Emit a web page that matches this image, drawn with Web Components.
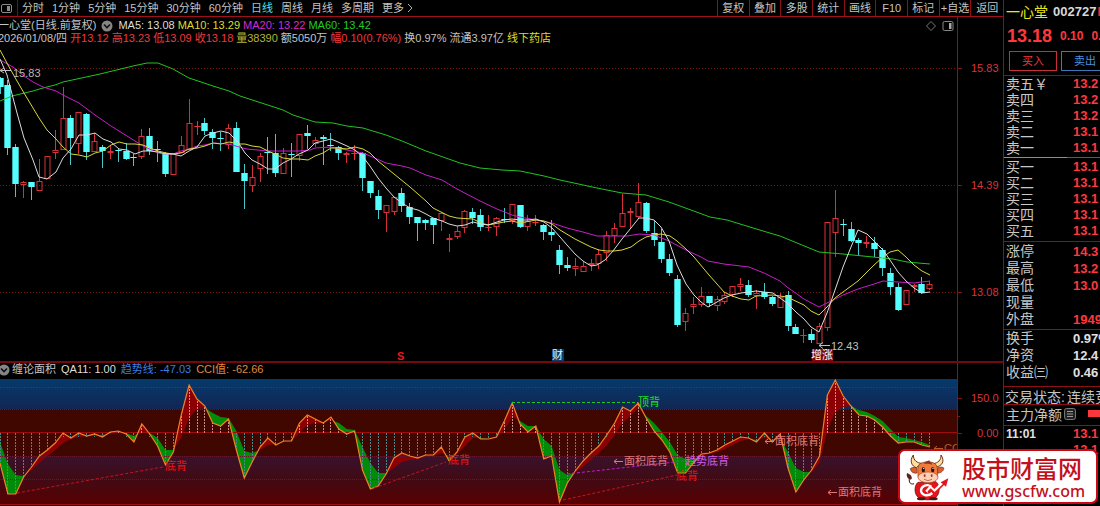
<!DOCTYPE html>
<html lang="zh-CN">
<head>
<meta charset="utf-8">
<title>一心堂 002727</title>
<style>
html,body{margin:0;background:#000}
body{font:11px "Liberation Sans","Noto Sans CJK SC",sans-serif;color:#c4c4c4;overflow:hidden}
</style>
</head>
<body>
<stock-app></stock-app>
<script>
const define=(name,html,setup)=>{
  const tpl=document.createElement('template');
  tpl.innerHTML=html;
  customElements.define(name,class extends HTMLElement{
    constructor(){
      super();
      this.attachShadow({mode:'open'}).append(tpl.content.cloneNode(true));
    }
    connectedCallback(){ if(setup&&!this.ready){this.ready=true;setup(this,this.shadowRoot);} }
  });
};
const STEP=7.88;

/* ---------- toolbar ---------- */
define('tool-bar',`
<style>
:host{display:flex;height:16px;border-bottom:1px solid #a01018;overflow:hidden}
button{all:unset;white-space:nowrap;line-height:15px;cursor:pointer}
.panel{width:17px;border-right:1px solid #701018;display:flex;align-items:center}
.periods{display:flex;flex:1;gap:8px;padding-left:4px}
.on{color:#45e6ea}
.more{display:flex;align-items:center;gap:3px}
.tools{display:grid;grid-template-columns:repeat(9,1fr);width:285px;border-left:1px solid #901018}
.tools button{text-align:center;border-right:1px solid #901018}
.tools button:last-child{border:0}
</style>
<button class="panel" aria-label="面板"><svg width="13" height="13" fill="none" stroke="#8c8c8c"><rect x="1.500" y="2.500" width="10" height="8" rx="1.500"/><rect x="7.500" y="4.500" width="2" height="4" fill="#8c8c8c"/></svg></button>
<div class="periods"></div>
<div class="tools"></div>`,(el,root)=>{
  const make=(box,text,cls)=>{const b=document.createElement('button');b.textContent=text;if(cls)b.className=cls;box.append(b);return b;};
  const p=root.querySelector('.periods'),t=root.querySelector('.tools');
  '分时,1分钟,5分钟,15分钟,30分钟,60分钟,日线,周线,月线,多周期'.split(',').forEach(s=>make(p,s,s==='日线'?'on':''));
  make(p,'更多','more').insertAdjacentHTML('beforeend','<svg width="6" height="10" fill="none" stroke="#b0b0b0"><path d="M1 1l4 4-4 4"/></svg>');
  '复权,叠加,多股,统计,画线,F10,标记,+自选,返回'.split(',').forEach(s=>make(t,s));
});

/* ---------- legend drawn over a plot ---------- */
define('legend-line',`
<style>
:host{display:flex;align-items:center;gap:3px;line-height:13px;white-space:nowrap}
::slotted(svg){flex:none;margin:0 2px}
</style><slot></slot>`);

/* ---------- price chart ---------- */
/* kind (c falling, r rising), body top, body bottom, high, low */
const CANDLES=`c78,87,77,94 c85,148,80,155 c147,184,144,197 r182,185,181,198 c182,187,182,200 r181,191,159,191 r156,179,156,179 r150,153,130,159 r118,150,87,150 c118,138,115,165
r112,144,112,154 c114,152,113,160 r141,152,133,152 c147,151,145,168 r151,153,145,159 c150,151,148,162 c151,159,143,160 c157,158,154,166 r136,157,129,159 c136,151,128,155
c149,150,141,162 c153,174,152,177 r153,175,153,175 r145,153,136,153 r123,150,99,150 r126,127,121,135 c123,131,118,135 c132,138,129,149 c138,139,132,151 r128,145,124,149
c128,172,122,172 c173,181,164,209 r177,186,165,192 r156,169,153,182 c152,153,137,174 c153,173,134,177 r153,174,148,174 c154,155,143,177 r134,156,134,161 c133,136,125,149
r140,144,137,147 c137,139,135,165 c145,146,133,151 c147,153,146,160 r153,155,152,163 r153,154,145,160 c153,178,152,191 c181,193,181,198 c196,210,190,219 r205,213,205,232
r197,212,197,215 c193,206,188,212 c207,217,203,224 c217,223,217,241 c220,223,219,230 c218,225,218,244 r213,221,212,231 r238,240,234,252 r231,237,226,239 r211,228,210,233
c212,218,208,224 c215,227,209,231 r227,228,215,231 r218,227,217,236 c219,220,208,223 r204,221,204,224 c205,227,205,228 r221,227,215,231 r222,223,215,226 c225,232,224,240
c232,235,220,241 c250,265,245,274 c265,268,257,271 r266,269,258,276 r266,272,261,272 r263,265,259,271 r254,264,249,269 r235,253,231,261 r228,236,223,243 r213,227,194,227
r211,213,208,228 r202,217,183,219 c203,231,202,233 c233,240,220,246 c242,259,229,263 c259,273,254,276 c279,325,275,327 r313,322,308,331 r304,307,297,314 r296,305,287,307
c296,303,296,307 r299,306,296,311 r295,302,292,304 r286,295,286,297 r284,287,278,291 c285,295,280,297 r293,296,290,309 c292,297,283,299 c297,304,296,306 r297,308,293,308
c295,326,291,331 c327,334,324,334 r335,336,329,343 c334,340,329,343 r326,344,323,344 r222,328,222,331 r218,233,190,257 c224,225,219,236 c229,241,222,242 c240,243,238,255
r242,244,236,248 c243,249,237,257 c250,268,248,276 c273,287,268,295 c287,310,283,311 r290,305,290,305 r285,287,284,292 c284,293,277,294 r284,289,281,290`
.trim().split(/\s+/).map(s=>[s[0],...s.slice(1).split(',').map(Number)]);

define('price-chart',`
<style>
:host{display:grid;overflow:hidden}
.plot,.info{grid-area:1/1;min-width:0}
.plot{display:block;width:100%;height:auto}
.info{display:grid;grid-template-columns:1fr auto;align-content:start;padding:2px 49px 0 0;margin-left:-2px;z-index:1}
.info legend-line:last-of-type{grid-column:1/3}
.icons{display:flex;gap:5px;align-items:center}
.m5{color:#ddd}.m10,.y{color:#dcdc2c}.m20{color:#d428d4}.m60{color:#22cc22}.r{color:#f0383c}.v{color:#b4b43a}
text{font-size:11px}
</style>
<svg class="plot" viewBox="0 17 1003 344"></svg>
<div class="info">
<legend-line><span>一心堂(日线.前复权)</span><svg width="12" height="12"><circle cx="6" cy="6" r="5.500" fill="#858585"/><path d="M3 4.500l3 3 3-3" fill="none" stroke="#111" stroke-width="1.600"/></svg><span class="m5">MA5: 13.08</span> <span class="m10">MA10: 13.29</span> <span class="m20">MA20: 13.22</span> <span class="m60">MA60: 13.42</span></legend-line>
<div class="icons"><svg width="12" height="12" fill="none" stroke="#777"><path d="M6 1.500L10.500 6 6 10.500 1.500 6z"/></svg><svg width="12" height="12" fill="none" stroke="#888"><rect x="1" y="1.500" width="10" height="9" rx="1.500"/><rect x="7" y="3" width="2.500" height="6" fill="#aaa" stroke="none"/></svg></div>
<legend-line><span>2026/01/08/四</span> <span class="r">开13.12</span> <span class="r">高13.23</span> <span class="r">低13.09</span> <span class="r">收13.18</span> <span class="v">量38390</span> <span>额5050万</span> <span class="r">幅0.10(0.76%)</span> <span>换0.97%</span> <span>流通3.97亿</span> <span class="y">线下药店</span></legend-line>
</div>`,(el,root)=>{
  let s='';
  for(const y of [68.5,185.5,292.5]) s+=`<path d="M0 ${y}H957" stroke="#701414" stroke-dasharray="1 2"/><path d="M957 ${y}h5" stroke="#8c1016"/>`;
  s+='<path d="M957.500 17V361" stroke="#8c1016"/>';
  s+=[['15.83',72],['14.39',189],['13.08',296]].map(([t,y])=>`<text x="971" y="${y}" fill="#d8343c">${t}</text>`).join('');
  CANDLES.forEach(([k,t,b,h,l],i)=>{
    const c=Math.floor(i*STEP)+.5, x=c-3.2;
    if(k==='c'){
      s+=`<path d="M${c} ${h}V${l}" stroke="#46c8c8"/>`;
      s+=`<rect x="${x}" y="${t}" width="6.400" height="${b-t}" fill="#54ffff"/>`;
    }else if(b-t<2){
      s+=`<path d="M${c} ${h}V${l}M${x} ${t+.5}h6.400" stroke="#e83038"/>`;
    }else{
      s+=`<path d="M${c} ${h}V${t}M${c} ${b}V${l}" stroke="#d83038"/><rect x="${c-2.5}" y="${t+.5}" width="5" height="${b-t-1}" fill="none" stroke="#d83038"/>`;
    }
  });
  const line=(c,p)=>`<polyline fill="none" stroke="${c}" points="${p}"/>`;
  s+=line('#20c420','0,101 12,96 33,91 43,88 55,85 63,82 100,74 133,66 147,63 158,63 173,69 189,78 213,86 229,91 240,96 283,110 293,115 315,122 333,123 347,126 363,128 386,135 402,141 426,151 443,157 460,163 480,168 502,170 520,171 544,176 560,180 597,188 622,193 646,195 669,202 680,206 710,217 727,220 763,231 780,236 819,252 843,254 873,257 893,259 907,262 930,264');
  s+=line('#c81ec8','0,60 13,67 24,76 33,82 43,87 56,91 63,95 79,103 95,115 111,126 127,136 143,146 158,153 166,154 173,154 181,151 189,149 197,146 205,145 213,143 229,144 239,147 247,149 268,151 299,151 310,150 315,148 331,147 347,150 363,153 377,159 386,163 402,166 410,168 426,175 442,180 457,189 480,201 497,209 512,215 520,217 536,220 552,223 567,228 583,232 597,236 627,236 639,234 654,235 669,241 686,250 701,257 708,261 724,264 749,267 764,273 780,281 787,287 804,299 819,307 827,303 843,295 858,289 874,284 883,281 898,282 914,283 930,281');
  s+=line('#d8d83c','0,50 8,65 17,81 24,93 33,108 39,118 47,130 56,139 63,147 71,154 79,155 87,157 95,153 103,151 111,145 119,142 127,144 135,144 143,145 150,148 158,151 166,153 173,154 181,153 189,149 197,148 205,146 213,143 221,144 229,142 239,144 245,144 252,146 260,147 268,151 275,154 283,158 291,159 299,159 308,160 315,156 323,153 331,148 338,148 347,149 355,147 363,149 370,153 378,161 394,174 410,187 426,201 433,208 449,216 457,218 473,219 481,223 488,225 504,222 512,221 520,223 536,220 544,221 552,224 560,230 575,239 591,247 599,250 607,251 614,251 622,250 631,247 639,241 646,237 654,235 661,234 670,236 677,241 686,249 694,257 709,275 717,284 724,292 732,296 741,299 749,300 756,296 773,295 787,297 804,305 811,311 819,315 827,307 835,298 843,292 858,281 874,265 883,257 890,252 898,250 906,257 914,265 922,271 930,275');
  s+=line('#dcdcdc','0,59 7,75 17,113 24,138 33,160 39,177 47,179 56,172 63,158 71,149 79,135 87,135 95,133 103,139 111,142 119,149 127,150 135,154 143,151 150,151 158,152 166,154 173,154 181,156 189,151 197,147 205,136 213,133 221,131 229,133 238,142 245,153 252,160 260,164 268,169 275,169 283,163 291,159 299,154 308,150 315,143 323,141 331,139 338,142 347,146 355,150 363,157 370,166 378,178 386,188 394,197 402,203 410,208 418,210 426,214 433,218 442,221 449,224 457,226 465,225 473,222 481,224 488,225 497,222 504,220 512,219 520,220 528,220 536,219 544,222 552,228 560,237 567,245 575,254 583,261 591,266 597,265 605,260 613,251 622,239 631,228 639,218 646,218 654,220 661,227 669,241 677,265 686,284 694,295 701,302 708,307 717,302 724,298 732,295 741,293 749,292 756,291 764,292 773,293 780,298 787,303 796,312 804,319 811,327 819,332 827,313 835,290 843,267 851,247 858,230 867,234 874,241 883,250 890,260 898,272 906,281 914,288 922,293 930,292');
  s+='<path d="M0 70.500H11M4 68l-4 2.500 4 2.500M819 345.500H830M823 342.500l-4 3 4 3" fill="none" stroke="#c0c0c0"/>';
  s+='<text x="13" y="77" fill="#b8b8b8">15.83</text><text x="831" y="350" fill="#c0c0c0">12.43</text>';
  s+='<text x="397" y="360" fill="#f01818" font-weight="bold">S</text>';
  s+='<rect x="552" y="349" width="12" height="12" fill="#0c3c6c"/><text x="552" y="359" fill="#e8f4ff">财</text>';
  s+='<rect x="812" y="349" width="21" height="12" fill="#7a0c10"/><text x="811" y="359" fill="#fff">增涨</text>';
  root.querySelector('.plot').innerHTML=s;
});

/* ---------- indicator chart ---------- */
const CCI=[463,494,494,477,467,456,450,443,433,438,433,436,434,437,432,431,434,442,424,434,446,465,452,415,385,399,406,423,426,419,450,478,462,447,438,445,441,441,423,415,419,423,417,429,434,431,470,489,486,474,458,453,456,458,455,455,447,461,452,437,433,439,439,437,421,403,424,432,426,459,456,502,483,471,461,453,446,435,423,407,411,403,418,431,440,452,473,473,463,454,453,450,445,441,437,438,442,433,442,434,468,492,480,470,456,395,380,396,406,415,416,420,427,436,443,442,442,445,447];
const TREND=[442,464,475,476,470,463,456,450,443,439,437,436,436,435,434,432,433,436,431,433,438,450,450,437,418,409,408,413,417,418,431,451,453,450,445,444,442,441,433,425,423,423,420,423,429,430,447,463,473,473,468,462,460,459,457,456,453,456,454,446,438,438,439,438,430,417,421,426,426,439,446,470,475,472,467,460,453,445,435,423,416,408,416,423,432,442,455,459,459,456,454,452,449,445,441,439,440,438,440,438,452,468,472,472,463,430,412,407,406,410,412,416,421,429,437,438,440,442,445];

define('cci-chart',`
<style>
:host{display:grid;overflow:hidden;border-top:2px solid #74080e}
.plot,legend-line{grid-area:1/1;min-width:0}
.plot{display:block;width:100%;height:auto}
legend-line{align-self:start;z-index:1;margin-left:-4px;gap:5px}
.b{color:#3a7ee0}.o{color:#e08a3c}.w{color:#ddd}
text{font-size:11px}
</style>
<svg class="plot" viewBox="0 363 1003 143"></svg>
<legend-line><svg width="12" height="12"><circle cx="6" cy="6" r="5.500" fill="#858585"/><path d="M3 4.500l3 3 3-3" fill="none" stroke="#111" stroke-width="1.600"/></svg><span style="margin-left:-5px">缠论面积</span> <span class="w">QA11: 1.00</span> <span class="b">趋势线: -47.03</span> <span class="o">CCI值: -62.66</span></legend-line>`,(el,root)=>{
  let s=`<defs><linearGradient id="hi" x2="0" y2="1"><stop stop-color="#053a6c"/><stop offset="1" stop-color="#122654"/></linearGradient>
  <linearGradient id="lo" x2="0" y2="1"><stop stop-color="#38122c"/><stop offset=".5" stop-color="#420a14"/><stop offset="1" stop-color="#580000"/></linearGradient></defs>
  <rect y="379" width="957" height="30" fill="url(#hi)"/><rect y="409" width="957" height="47" fill="#400600"/><rect y="456" width="957" height="48" fill="url(#lo)"/>
  <rect y="505" width="957" height="1" fill="#300"/>`;
  const red=[],green=[];
  for(let i=0;i<CCI.length-1;i++){
    const x0=i*STEP,x1=x0+STEP,a=CCI[i],b=CCI[i+1],p=TREND[i],q=TREND[i+1],d=a-p,e=b-q;
    if(d*e<0){
      const k=d/(d-e),x=x0+k*STEP,y=a+k*(b-a);
      (d<0?red:green).push(`M${x0} ${a}L${x} ${y}L${x0} ${p}z`);
      (e<0?red:green).push(`M${x1} ${b}L${x} ${y}L${x1} ${q}z`);
    }else (d+e<0?red:green).push(`M${x0} ${a}L${x1} ${b}V${q}L${x0} ${p}z`);
  }
  s+=`<path d="${red.join('')}" fill="#8c0004"/><path d="${green.join('')}" fill="#008c08"/>`;
  s+='<path d="M0 387.500H957" stroke="#8c1430" stroke-dasharray="2 1"/><path d="M0 409.500H957M0 456.500H957M0 479.500H957" stroke="#64182c" stroke-dasharray="1 1"/><path d="M0 432.500H957" stroke="#a00c0c"/><path d="M0 504.500H957" stroke="#981010"/>';
  CCI.forEach((y,i)=>{
    const x=Math.floor(i*STEP)+.5;
    s+=`<path d="M${x} 433V${y<433?y:Math.max(y,437)}" stroke="${y<433?'#cc8c8c':'#4c8888'}" stroke-dasharray="2 1"/>`;
  });
  s+=`<polyline fill="none" stroke="#f08228" stroke-width="1.200" points="${CCI.map((y,i)=>i*STEP+','+y).join(' ')}"/>`;
  const dash=(c,d)=>`<path d="${d}" stroke="${c}" stroke-dasharray="3 2" fill="none"/>`;
  s+=dash('#c41420','M17 493L163 467M374 488L446 462M563 500L677 475')+dash('#20c820','M512 402.500H638')+dash('#c01cc8','M567 474L684 461');
  const arrow=(x,y,c)=>`<path d="M${x} ${y}h9M${x+3} ${y-2.5}l-3 2.500 3 2.500" stroke="${c}" fill="none"/>`;
  const label=(x,y,c,t)=>`<text x="${x}" y="${y}" fill="${c}">${t}</text>`;
  s+=label(165,470,'#f01414','底背')+label(448,464,'#f01414','底背')+label(676,480,'#f01414','底背')+label(638,406,'#20e020','顶背')+label(685,465,'#d85ce8','趋势底背');
  for(const [x,y] of [[614,465],[765,445],[828,496]]) s+=arrow(x,y-3.5,'#e07878')+label(x+10,y,'#e07878','面积底背');
  s+=`<svg x="930" y="440" width="27" height="16" viewBox="930 440 27 16">${arrow(934,448.500,'#b0602c')}${label(944,452,'#b0602c','CCI')}</svg>`;
  s+='<path d="M957.500 363V506M957 398.500h5M957 416.500h3M957 433.500h5" stroke="#8c1016"/>';
  s+=label(971,402,'#d8343c','150.0')+label(977,437,'#d8343c','0.00');
  root.querySelector('.plot').innerHTML=s;
});

/* ---------- quote side panel ---------- */
define('quote-table',`
<style>
:host{display:block;border-bottom:1px solid #8c1016;padding:var(--pad,0);font-size:14px}
:host([split]){border-image:linear-gradient(90deg,#b08c40 65%,#2c64a0 65%) 1}
table{border-collapse:collapse;table-layout:fixed;width:100%}
th,td{padding:0;font-weight:normal;text-align:left;line-height:var(--row,16px);height:var(--row,16px);white-space:nowrap;vertical-align:middle}
th{width:67px;padding-left:2px;color:#c8c8c8}
td{font-size:13px;font-weight:bold;color:#ff383e;overflow:hidden}
.w{color:#e0e0e0}
</style><table><tbody></tbody></table>`,(el,root)=>{
  const body=root.querySelector('tbody'),white=el.hasAttribute('white');
  el.getAttribute('rows').split(';').forEach(r=>{
    const [k,v]=r.split('|'),tr=body.insertRow(),th=document.createElement('th');
    th.scope='row';th.textContent=k;tr.append(th);
    const td=tr.insertCell();td.textContent=v||'';if(white)td.className='w';
  });
});

define('quote-panel',`
<style>
:host{display:block;width:96px;border-left:1px solid #8c1016;overflow:hidden;background:#000}
.name{display:flex;gap:5px;padding:3px 0 1px 2px;line-height:18px;font-size:14px;color:#e8e820;white-space:nowrap}
.name b{font-size:13px;color:#d8d8d8}.name i{font:bold 12px/18px "Liberation Sans",sans-serif;color:#f03038;margin-left:-4px}
.price{display:flex;gap:8px;align-items:center;height:28px;padding-left:3px;font-weight:bold;font-size:12px;color:#ff383e;white-space:nowrap}
.price strong{font-size:18px}
.trade{display:flex;gap:4px;padding:1px 0 4px 5px;border-bottom:1px solid #8c1016}
button{flex:none;box-sizing:border-box;width:48px;height:20px;padding:0;background:#000;font:11px/16px "Liberation Sans","Noto Sans CJK SC",sans-serif;border:1px solid #c83038;color:#f0383c}
button+button{border-color:#3c78b4;color:#4c90e0}
.line{display:flex;align-items:center;gap:2px;height:17px;padding-left:1px;border-bottom:1px solid #8c1016;font-size:14px;white-space:nowrap}
.flow{padding-bottom:3px;padding-left:2px}
.flow svg{flex:none}.bar{flex:none;width:20px;height:7px;margin-left:10px;background:#ff383e}
.ticks{border-collapse:collapse;font-size:12px;font-weight:bold;color:#e0e0e0}
.ticks td{padding:0 0 0 2px;height:16px;line-height:16px;min-width:67px}
.ticks td+td{padding:0;color:#ff383e;font-size:13px}
</style>
<div class="name"><span>一心堂</span><b>002727</b><i>R</i></div>
<div class="price"><strong>13.18</strong><span>0.10</span><span>0.76%</span></div>
<div class="trade"><button>买入</button><button>卖出</button></div>
<quote-table split style="--pad:0 0 1px" rows="卖五￥|13.2;卖四|13.2;卖三|13.2;卖二|13.1;卖一|13.1"></quote-table>
<quote-table style="--pad:1px 0 2px" rows="买一|13.1;买二|13.1;买三|13.1;买四|13.1;买五|13.1"></quote-table>
<quote-table style="--pad:1px 0 1px;--row:17px" rows="涨停|14.3;最高|13.2;最低|13.0;现量|;外盘|1949"></quote-table>
<quote-table white style="--pad:0 0 5px;--row:17px" rows="换手|0.97%;净资|12.4;收益㈢|0.46"></quote-table>
<div class="line"><span>交易状态:</span><span>连续竞价</span></div>
<div class="line flow"><span>主力净额</span><svg width="12" height="12"><rect x=".500" y=".500" width="11" height="11" rx="2" fill="#222" stroke="#777"/><path d="M3 3.500h6M3 6h6M3 8.500h6" stroke="#999"/></svg><span class="bar"></span></div>
<table class="ticks"><tr><td>11:01</td><td>13.1</td></tr><tr><td></td><td>13.1</td></tr></table>`);

/* ---------- site badge ---------- */
define('site-badge',`
<style>
:host{display:block}
a{display:flex;align-items:center;box-sizing:border-box;width:200px;height:55px;padding:0 0 0 6px;gap:10px;background:#fff;border:2px solid #cc0814;border-radius:7px;color:#c4101c;text-decoration:none;white-space:nowrap}
svg{flex:none}
.t{display:grid}
.cn{font:500 24px/28px "Noto Sans CJK SC",sans-serif}
.en{font:500 16px/18px "Noto Sans","Open Sans",sans-serif}
</style>
<a href="#"><svg width="46" height="48" viewBox="0 0 138 144">
<path d="M24 92C14 96 8 88 10 76" fill="none" stroke="#3c1812" stroke-width="3"/><path d="M12 80C0 74 2 64 3 60c8 3 16 8 14 18z" fill="#5a2418"/>
<path d="M36 88C24 96 22 128 42 136c24 10 50 4 56-16 4-14 0-26-8-34z" fill="#e4141c" stroke="#5c1010" stroke-width="2"/>
<ellipse cx="46" cy="137" rx="13" ry="5" fill="#4c1814"/><ellipse cx="82" cy="137" rx="13" ry="5" fill="#4c1814"/>
<path d="M76 101C64 92 46 98 45 112c0 15 20 20 34 8" fill="none" stroke="#fff" stroke-width="7"/>
<path d="M61 116l12-13 12 11 24-22" fill="none" stroke="#fff" stroke-width="9"/><path d="M66 117l8-8 12 11 28-27" fill="none" stroke="#e4141c" stroke-width="5"/><path d="M104 88l23-12-7 25z" fill="#e4141c"/>
<path d="M31 44C18 40 9 24 22 6c0 17 12 24 25 25zM89 42c19-2 29-18 16-36 1 16-10 24-23 26z" fill="#ffdf9e" stroke="#6c3018" stroke-width="3"/>
<path d="M32 45c-11-5-16 0-19 2 2 11 11 15 20 13zM94 45c11-5 18-2 20 1-3 11-12 15-21 14z" fill="#d85d2d" stroke="#702818" stroke-width="2"/>
<path d="M40 34c11-9 38-11 49 0 8 9 5 24 6 37-5 23-54 24-59 0 1-13-4-28 4-37z" fill="#f07b3d" stroke="#702818" stroke-width="2"/>
<path d="M54 33c3-10 13-7 16-12 0 8 8 5 8 14-8-4-15-3-24-2z" fill="#8c3420"/>
<ellipse cx="52" cy="50" rx="5" ry="8" fill="#2c1612"/><ellipse cx="80" cy="50" rx="5" ry="8" fill="#2c1612"/><circle cx="53" cy="46" r="2" fill="#fff"/><circle cx="81" cy="46" r="2" fill="#fff"/>
<ellipse cx="66" cy="73" rx="30" ry="16" fill="#ffd0b4" stroke="#b85030" stroke-width="2"/><ellipse cx="56" cy="68" rx="3" ry="4" fill="#984030"/><ellipse cx="77" cy="68" rx="3" ry="4" fill="#984030"/><path d="M54 79q12 8 24 0" fill="none" stroke="#984030" stroke-width="2"/>
</svg><span class="t"><span class="cn">股市财富网</span><span class="en">www.gscfw.com</span></span></a>`);

define('stock-app',`
<style>
:host{display:grid;position:relative;grid-template-columns:minmax(0,1fr) auto;min-height:100vh;overflow:hidden}
main{display:flex;flex-direction:column;min-width:0}
site-badge{position:absolute;right:2px;bottom:2px;z-index:2}
</style>
<main><tool-bar></tool-bar><price-chart></price-chart><cci-chart></cci-chart></main>
<quote-panel></quote-panel>
<site-badge></site-badge>`);
</script>
</body>
</html>
